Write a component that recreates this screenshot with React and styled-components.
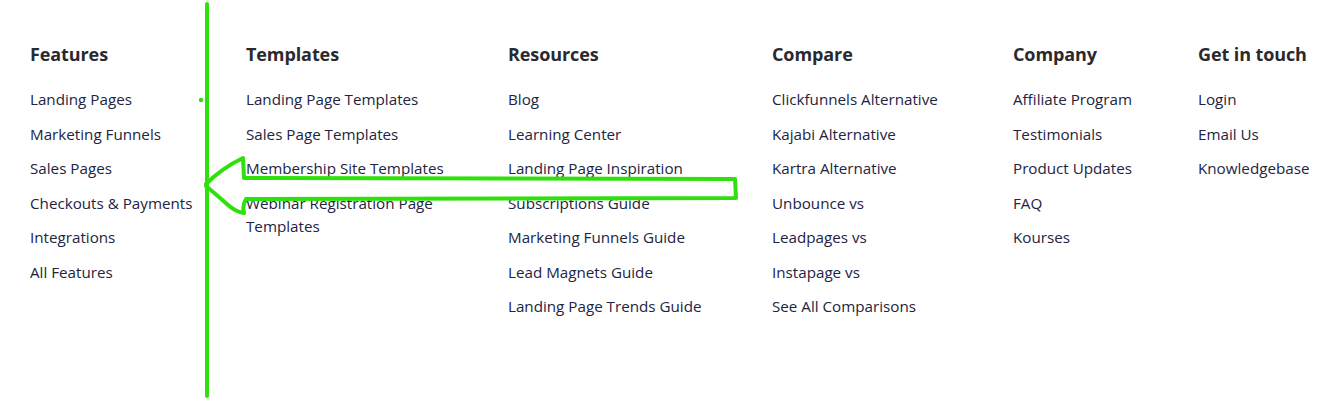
import styled, { createGlobalStyle } from 'styled-components';

const GlobalStyle = createGlobalStyle`
    html, body {
        margin: 0;
        padding: 0;
        background: #ffffff;
    }
    body {
        font-family: 'Open Sans', 'Liberation Sans', sans-serif;
        -webkit-font-smoothing: antialiased;
    }
`;

const Page = styled.div`
    position: relative;
    width: 1328px;
    height: 401px;
    overflow: hidden;
`;

const Footer = styled.footer`
    display: grid;
    grid-template-columns: 216px 262px 264px 241px 185px 1fr;
    padding: 42px 0 0 30px;
`;

const Column = styled.div`
    display: flex;
    flex-direction: column;
`;

const Heading = styled.h4`
    margin: 0 0 22px;
    font-size: 18px;
    line-height: 24px;
    font-weight: 700;
    color: #2a2a2e;
    letter-spacing: -0.1px;
`;

const LinkList = styled.ul`
    list-style: none;
    margin: 0;
    padding: 0;
    display: flex;
    flex-direction: column;
    gap: 11.5px;
`;

const Link = styled.a`
    display: block;
    max-width: ${(p) => p.$maxWidth || 'none'};
    font-size: 15.2px;
    line-height: 23px;
    color: #22243f;
    text-decoration: none;
`;

const Scribble = styled.svg`
    position: absolute;
    left: 0;
    top: 0;
    pointer-events: none;
`;

const columns = [
    {
        title: 'Features',
        links: ['Landing Pages', 'Marketing Funnels', 'Sales Pages', 'Checkouts & Payments', 'Integrations', 'All Features'],
    },
    {
        title: 'Templates',
        maxWidth: '205px',
        links: ['Landing Page Templates', 'Sales Page Templates', 'Membership Site Templates', 'Webinar Registration Page Templates'],
    },
    {
        title: 'Resources',
        links: [
            'Blog',
            'Learning Center',
            'Landing Page Inspiration',
            'Subscriptions Guide',
            'Marketing Funnels Guide',
            'Lead Magnets Guide',
            'Landing Page Trends Guide',
        ],
    },
    {
        title: 'Compare',
        links: [
            'Clickfunnels Alternative',
            'Kajabi Alternative',
            'Kartra Alternative',
            'Unbounce vs',
            'Leadpages vs',
            'Instapage vs',
            'See All Comparisons',
        ],
    },
    {
        title: 'Company',
        links: ['Affiliate Program', 'Testimonials', 'Product Updates', 'FAQ', 'Kourses'],
    },
    {
        title: 'Get in touch',
        links: ['Login', 'Email Us', 'Knowledgebase'],
    },
];

export default function App() {
    return (
        <>
            <GlobalStyle />
            <Page>
                <Footer>
                    {columns.map((col) => (
                        <Column key={col.title}>
                            <Heading>{col.title}</Heading>
                            <LinkList>
                                {col.links.map((l) => (
                                    <li key={l}>
                                        <Link href="#" $maxWidth={col.maxWidth}>
                                            {l}
                                        </Link>
                                    </li>
                                ))}
                            </LinkList>
                        </Column>
                    ))}
                </Footer>

                {/* hand-drawn annotation over the page */}
                <Scribble width="1328" height="401" viewBox="0 0 1328 401">
                    <g fill="none" stroke="#2ee10a" strokeWidth="4" strokeLinecap="round" strokeLinejoin="round">
                        <path d="M207 4 L207 396" />
                        <path d="M206 184 Q222 168 243 158 L244 178 L735 179 L736 198 L246 199 Q242 206 244 213 Q236 212 228 205 Q218 196 206 186" />
                    </g>
                    <circle cx="201" cy="100" r="2.2" fill="#2ee10a" />
                </Scribble>
            </Page>
        </>
    );
}
